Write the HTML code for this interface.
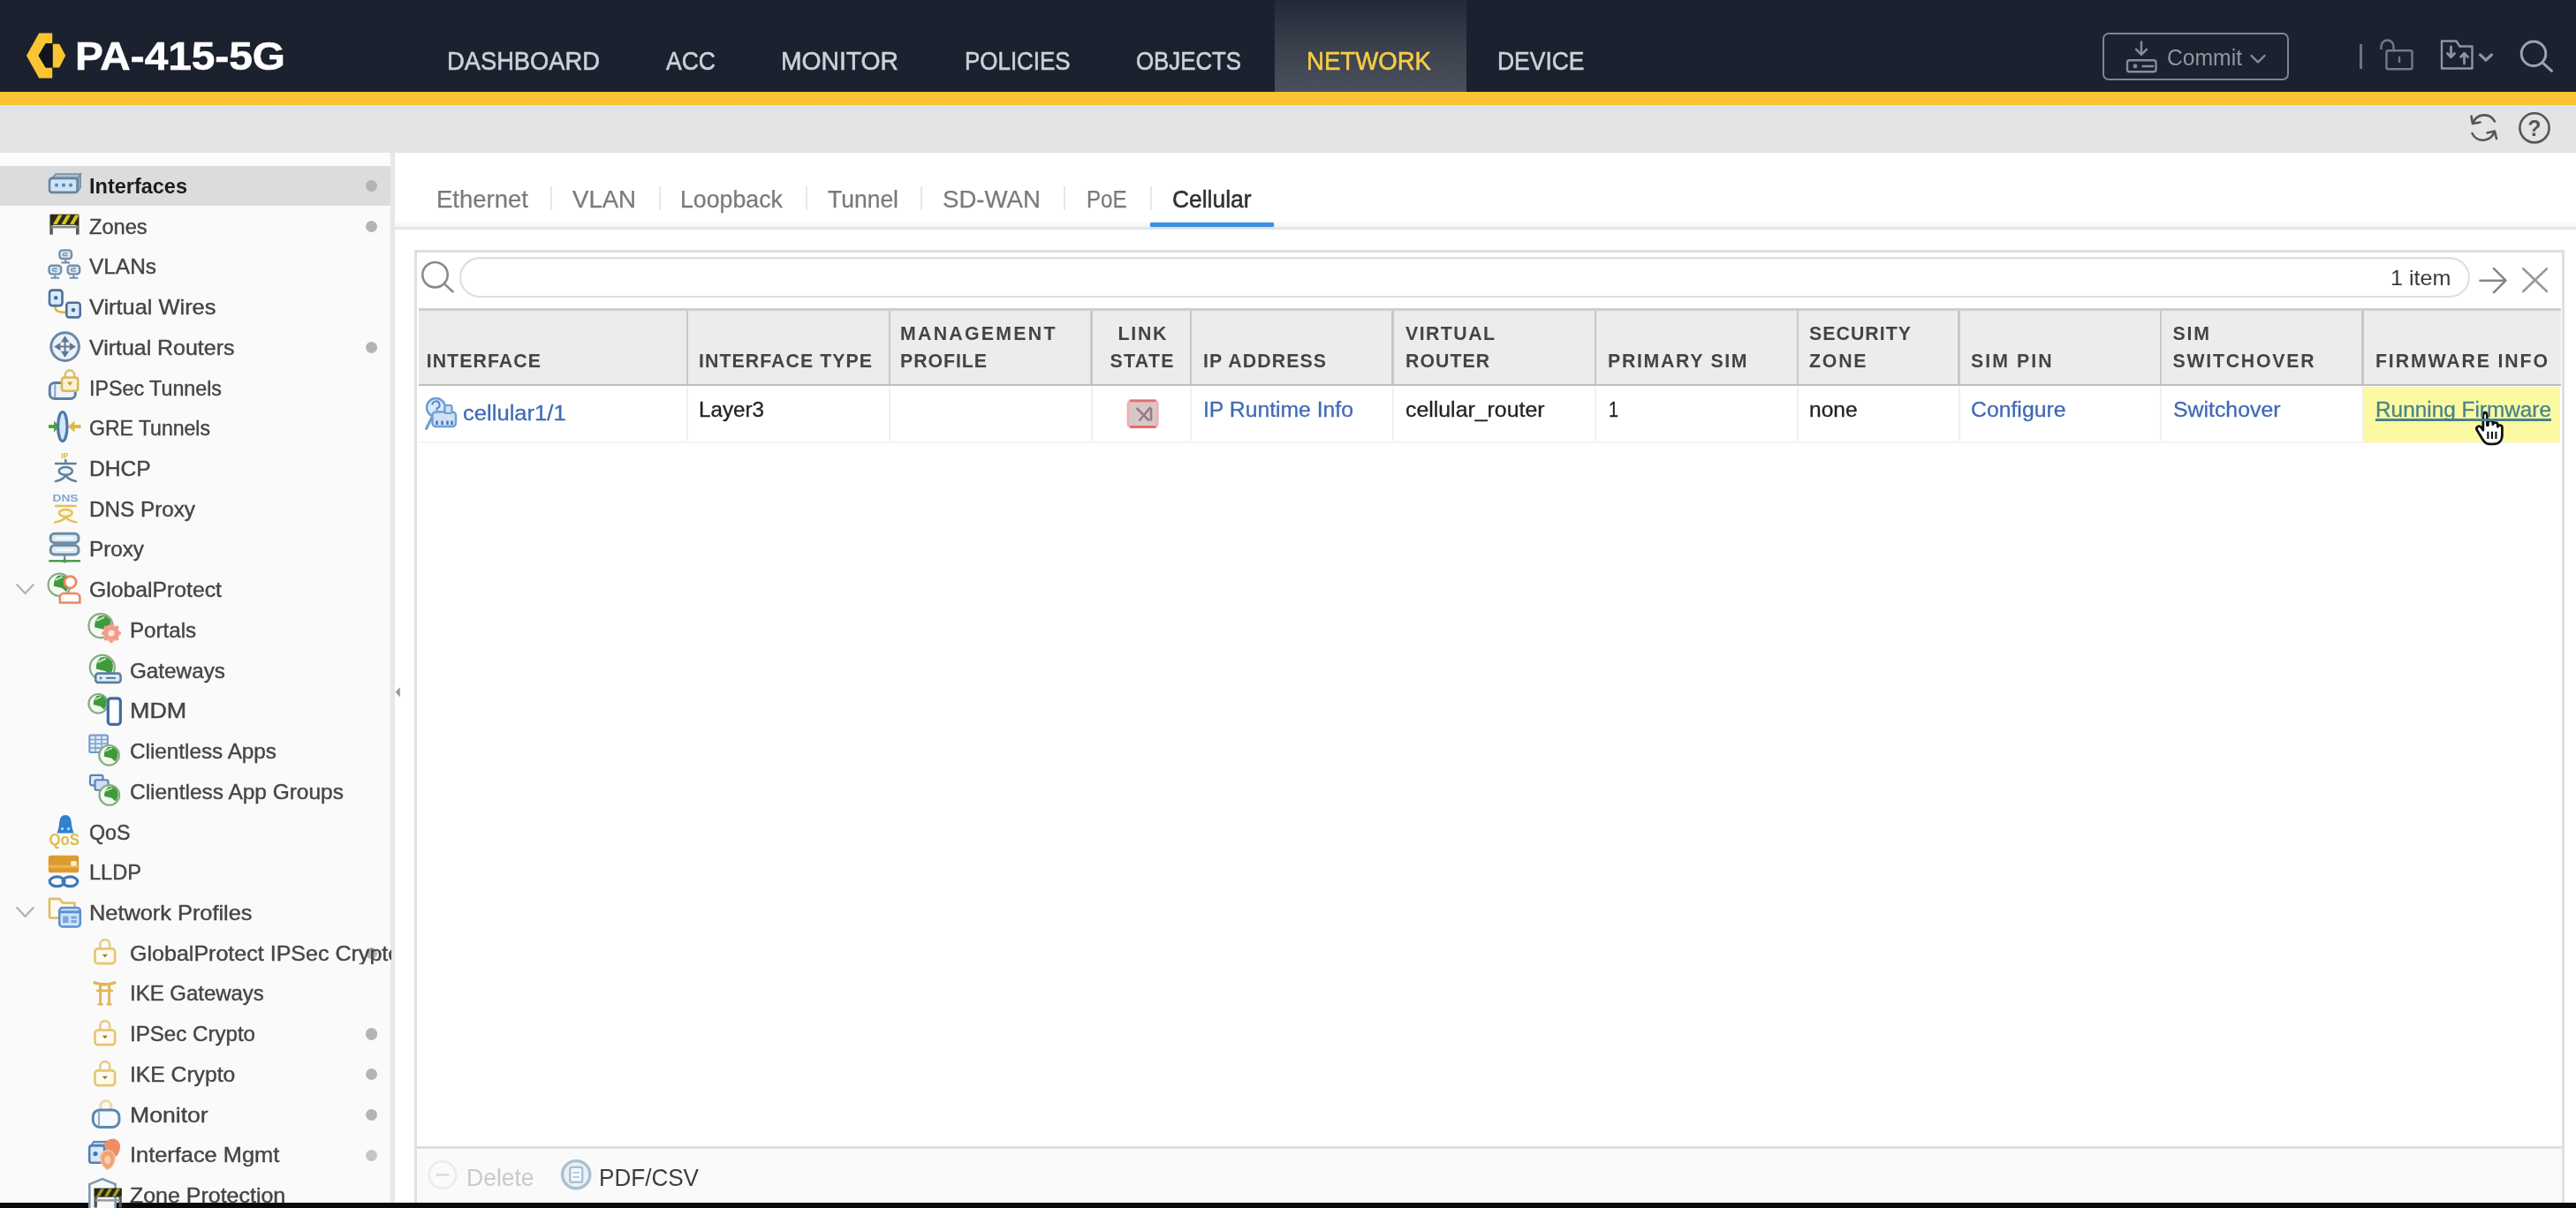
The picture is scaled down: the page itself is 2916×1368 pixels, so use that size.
<!DOCTYPE html>
<html lang="en"><head><meta charset="utf-8"><title>PA-415-5G</title>
<style>

*{box-sizing:border-box;margin:0;padding:0}
html,body{width:2916px;height:1368px;overflow:hidden;background:#fff;font-family:"Liberation Sans",sans-serif}
body{position:relative}
#app{position:absolute;left:0;top:0;width:2916px;height:1368px;overflow:hidden;will-change:transform}
.t{position:absolute;white-space:nowrap;transform-origin:0 50%;display:block;filter:blur(0.4px)}
.a{position:absolute}
ul{list-style:none}
.g{position:absolute;left:0;top:0;width:0;height:0;font-size:inherit;font-weight:inherit}
.nav{-webkit-text-stroke:0.6px currentColor}
.sb{-webkit-text-stroke:0.4px currentColor}
.tab{-webkit-text-stroke:0.25px currentColor}
.cell{-webkit-text-stroke:0.3px currentColor}
.act{-webkit-text-stroke:0.55px currentColor}
svg{position:absolute;overflow:visible;filter:blur(0.45px)}

</style></head>
<body>
<div id="app">
<div class="a" style="left:0px;top:0px;width:2916px;height:104.5px;background:#1b212e"></div>
<div class="a" style="left:1442.5px;top:0px;width:217px;height:104.5px;background:linear-gradient(180deg,#222836 0%,#3a404c 50%,#4b515c 100%)"></div>
<div class="a" style="left:0px;top:104.3px;width:2916px;height:15px;background:#fac432"></div>
<div class="a" style="left:0px;top:119.3px;width:2916px;height:54px;background:linear-gradient(180deg,#dde2f0 0,#dfe3ee 4px,#e3e4e6 7px)"></div>
<div class="a" style="left:2380px;top:37px;width:211px;height:54px;border:2.5px solid #7d8590;border-radius:7px"></div>
<div class="a" style="left:2671px;top:50px;width:2.5px;height:28px;background:#6d747f"></div>
<div class="a" style="left:0px;top:173px;width:443px;height:1195px;background:#fafafa"></div>
<div class="a" style="left:0px;top:173px;width:443px;height:15px;background:#fcfcfc"></div>
<div class="a" style="left:0px;top:188px;width:443px;height:45px;background:#dbdcdd"></div>
<div class="a" style="left:441.8px;top:173px;width:5.6px;height:1195px;background:#e6e7e9"></div>
<div class="a" style="left:414px;top:203.9px;width:13.4px;height:13.4px;border-radius:50%;background:#b4b4b4;filter:blur(0.7px)"></div>
<div class="a" style="left:414px;top:249.6px;width:13.4px;height:13.4px;border-radius:50%;background:#b4b4b4;filter:blur(0.7px)"></div>
<div class="a" style="left:414px;top:386.8px;width:13.4px;height:13.4px;border-radius:50%;background:#b4b4b4;filter:blur(0.7px)"></div>
<div class="a" style="left:414px;top:1072.9px;width:13.4px;height:13.4px;border-radius:50%;background:#b4b4b4;filter:blur(0.7px)"></div>
<div class="a" style="left:414px;top:1164.3px;width:13.4px;height:13.4px;border-radius:50%;background:#b4b4b4;filter:blur(0.7px)"></div>
<div class="a" style="left:414px;top:1210.1px;width:13.4px;height:13.4px;border-radius:50%;background:#b4b4b4;filter:blur(0.7px)"></div>
<div class="a" style="left:414px;top:1255.8px;width:13.4px;height:13.4px;border-radius:50%;background:#b4b4b4;filter:blur(0.7px)"></div>
<div class="a" style="left:414px;top:1301.5px;width:13.4px;height:13.4px;border-radius:50%;background:#c6c6c6;filter:blur(0.7px)"></div>
<div class="a" style="left:447.2px;top:249px;width:2469px;height:8px;background:linear-gradient(180deg,rgba(0,0,0,0),rgba(0,0,0,.045))"></div>
<div class="a" style="left:447.2px;top:256.8px;width:2469px;height:3.4px;background:#e5e5e5"></div>
<div class="a" style="left:1302px;top:252.3px;width:140px;height:5px;background:#3d8fe2;border-radius:1.5px;box-shadow:0 0 2px #9cc8f5"></div>
<div class="a" style="left:622.8px;top:211px;width:2.4px;height:27px;background:#e7e7e7"></div>
<div class="a" style="left:745.8px;top:211px;width:2.4px;height:27px;background:#e7e7e7"></div>
<div class="a" style="left:911.8px;top:211px;width:2.4px;height:27px;background:#e7e7e7"></div>
<div class="a" style="left:1041.8px;top:211px;width:2.4px;height:27px;background:#e7e7e7"></div>
<div class="a" style="left:1203.8px;top:211px;width:2.4px;height:27px;background:#e7e7e7"></div>
<div class="a" style="left:1301.8px;top:211px;width:2.4px;height:27px;background:#e7e7e7"></div>
<div class="a" style="left:469px;top:283px;width:2434px;height:1080px;border:3px solid #e0e0e0;border-bottom:0;background:#fff"></div>
<div class="a" style="left:519.5px;top:291.3px;width:2276px;height:46px;border:2.6px solid #dedede;border-radius:23px;background:#fff;box-shadow:inset 0 1px 2px rgba(0,0,0,.05)"></div>
<div class="a" style="left:474px;top:348.6px;width:2425px;height:88.6px;background:#ececec;border-top:3.2px solid #cfcfcf;border-bottom:2.6px solid #bdbdbd"></div>
<div class="a" style="left:776.5px;top:352px;width:2.4px;height:82.6px;background:#c8c8c8"></div>
<div class="a" style="left:776.7px;top:438px;width:2px;height:61px;background:#efefef"></div>
<div class="a" style="left:1005.6px;top:352px;width:2.4px;height:82.6px;background:#c8c8c8"></div>
<div class="a" style="left:1005.8px;top:438px;width:2px;height:61px;background:#efefef"></div>
<div class="a" style="left:1234.3px;top:352px;width:2.4px;height:82.6px;background:#c8c8c8"></div>
<div class="a" style="left:1234.5px;top:438px;width:2px;height:61px;background:#efefef"></div>
<div class="a" style="left:1346.8px;top:352px;width:2.4px;height:82.6px;background:#c8c8c8"></div>
<div class="a" style="left:1347px;top:438px;width:2px;height:61px;background:#efefef"></div>
<div class="a" style="left:1575.4px;top:352px;width:2.4px;height:82.6px;background:#c8c8c8"></div>
<div class="a" style="left:1575.6px;top:438px;width:2px;height:61px;background:#efefef"></div>
<div class="a" style="left:1804.8px;top:352px;width:2.4px;height:82.6px;background:#c8c8c8"></div>
<div class="a" style="left:1805px;top:438px;width:2px;height:61px;background:#efefef"></div>
<div class="a" style="left:2033.5px;top:352px;width:2.4px;height:82.6px;background:#c8c8c8"></div>
<div class="a" style="left:2033.7px;top:438px;width:2px;height:61px;background:#efefef"></div>
<div class="a" style="left:2216.4px;top:352px;width:2.4px;height:82.6px;background:#c8c8c8"></div>
<div class="a" style="left:2216.6px;top:438px;width:2px;height:61px;background:#efefef"></div>
<div class="a" style="left:2444.8px;top:352px;width:2.4px;height:82.6px;background:#c8c8c8"></div>
<div class="a" style="left:2445px;top:438px;width:2px;height:61px;background:#efefef"></div>
<div class="a" style="left:2673.4px;top:352px;width:2.4px;height:82.6px;background:#c8c8c8"></div>
<div class="a" style="left:2673.6px;top:438px;width:2px;height:61px;background:#efefef"></div>
<div class="a" style="left:474px;top:499.5px;width:2425px;height:2px;background:#f4f4f4"></div>
<div class="a" style="left:2676px;top:438px;width:222px;height:63px;background:#fbfaa2"></div>
<div class="a" style="left:472px;top:1297.5px;width:2428px;height:3px;background:#dedede"></div>
<div class="a" style="left:472px;top:1300.5px;width:2428px;height:62px;background:#fafafa"></div>
<div class="a" style="left:0px;top:1362px;width:2916px;height:6px;background:#0a0a0a"></div>

<svg width="2916" height="1368" viewBox="0 0 2916 1368" style="left:0;top:0" font-family="Liberation Sans, sans-serif">
<polygon points="29.9,62.9 44.2,37.4 59.2,37.4 59.2,49.3 51.7,49.3 43.6,62.9 51.7,76.5 59.2,76.5 59.2,88.4 44.2,88.4" fill="#fac432"/>
<polygon points="51.7,49.3 60,49.3 60,76.5 51.7,76.5 43.6,62.9" fill="#11141d"/>
<polygon points="59.8,49.8 67.2,49.8 74.2,62.9 67.2,76.5 59.8,76.5" fill="#fac432"/>
<g fill="none" stroke="#868d98" stroke-width="2.4" stroke-linecap="round" stroke-linejoin="round">
<path d="M2424,47.5 V61.5 M2418,55.8 L2424,61.8 L2430,55.8"/>
<rect x="2408" y="68.3" width="32.5" height="13" rx="2.5"/>
<path d="M2425.5,75 H2437"/>
<path d="M2548.5,63 L2556,70.5 L2563.5,63"/>
</g>
<circle cx="2417" cy="75" r="2.4" fill="#868d98"/>
<g fill="none" stroke="#8d949f" stroke-width="2.4" stroke-linejoin="round" stroke-linecap="round">
<g stroke="#737a86"><path d="M2695.5,55 V52.5 a7,7 0 0 1 14,0 V57"/>
<rect x="2701.5" y="57.3" width="29" height="21" rx="2"/>
<path d="M2716,65 v5"/></g>
<path d="M2764,77.5 V46.5 h16.5 l4,6 h14 V77.5 Z"/>
<path d="M2774.5,53 v11 M2770.5,60.5 l4,4.2 l4,-4.2" stroke-width="2.8"/>
<path d="M2789.5,72 v-11 M2785.5,64.5 l4,-4.2 l4,4.2" stroke-width="2.8"/>
<path d="M2807.5,62 l6.5,6.2 l6.5,-6.2" stroke-width="3.2"/>
</g>
<g fill="none" stroke="#9ca3ad" stroke-width="3" stroke-linecap="round">
<circle cx="2868" cy="60.8" r="13.8"/><path d="M2878.3,71.2 L2888.5,80.3"/>
</g>
<g fill="none" stroke="#565656" stroke-width="2.6" stroke-linecap="round" stroke-linejoin="round">
<path d="M2799.5,139 A13.5,13.5 0 0 1 2824,137.5"/>
<path d="M2823.5,149.5 A13.5,13.5 0 0 1 2798.5,151"/>
<path d="M2797.5,131.5 L2799,140 L2807.5,138.5"/>
<path d="M2826,157 L2824,148.5 L2815.5,150.5"/>
<circle cx="2869" cy="144.8" r="16.6"/>
</g>
<text x="2869" y="153.6" text-anchor="middle" font-size="25" font-weight="700" fill="#565656">?</text>
<polygon points="59,201.6 63,196.9 91.3,196.9 88,201.6" fill="#a9bfd0" stroke="#6f8ca6" stroke-width="1.5"/>
<polygon points="88,201.6 91.3,196.9 91.3,212.4 88,217.4" fill="#8ea8bc" stroke="#6f8ca6" stroke-width="1.2"/>
<rect x="56" y="201.9" width="31.6" height="16" rx="3" fill="#cfe4f5" stroke="#67859d" stroke-width="2.6"/>
<circle cx="64" cy="209.70000000000002" r="2.1" fill="#4d8cc6"/>
<circle cx="72" cy="209.70000000000002" r="2.1" fill="#4d8cc6"/>
<circle cx="80" cy="209.70000000000002" r="2.1" fill="#4d8cc6"/>
<rect x="56.3" y="243.13" width="3.6" height="22.5" fill="#5a5a5a"/><rect x="86" y="243.13" width="3.6" height="22.5" fill="#5a5a5a"/>
<rect x="57" y="242.63" width="32" height="12.2" fill="#2a2a17"/>
<polygon points="60,254.03 66,243.43 70.5,243.43 64.5,254.03" fill="#d9c51f"/>
<polygon points="69.5,254.03 75.5,243.43 80.0,243.43 74.0,254.03" fill="#d9c51f"/>
<polygon points="79,254.03 85,243.43 89.5,243.43 83.5,254.03" fill="#d9c51f"/>
<rect x="58" y="255.82999999999998" width="30" height="2.6" fill="#8a8a8a"/>
<rect x="67.4" y="283.36" width="13.6" height="9.6" rx="3" fill="#dbeaf7" stroke="#7590a9" stroke-width="2.4"/>
<path d="M76.7,286.76000000000005 h-4 a1.4,1.4 0 0 0 0,2.8 h4" fill="none" stroke="#7f9ab3" stroke-width="1.6"/>
<path d="M74.2,294.16 v2.6 M69.4,297.36 h9.6" fill="none" stroke="#7590a9" stroke-width="2.2"/>
<rect x="55.5" y="300.76" width="13.6" height="9.6" rx="3" fill="#dbeaf7" stroke="#7590a9" stroke-width="2.4"/>
<path d="M64.8,304.16 h-4 a1.4,1.4 0 0 0 0,2.8 h4" fill="none" stroke="#7f9ab3" stroke-width="1.6"/>
<path d="M62.3,311.56 v2.6 M57.5,314.76 h9.6" fill="none" stroke="#7590a9" stroke-width="2.2"/>
<rect x="76.60000000000001" y="300.76" width="13.6" height="9.6" rx="3" fill="#dbeaf7" stroke="#7590a9" stroke-width="2.4"/>
<path d="M85.9,304.16 h-4 a1.4,1.4 0 0 0 0,2.8 h4" fill="none" stroke="#7f9ab3" stroke-width="1.6"/>
<path d="M83.4,311.56 v2.6 M78.60000000000001,314.76 h9.6" fill="none" stroke="#7590a9" stroke-width="2.2"/>
<path d="M62.5,347.09000000000003 Q62,354.59000000000003 75,353.59000000000003" fill="none" stroke="#d8b944" stroke-width="2.6"/>
<rect x="56" y="328.59000000000003" width="14.5" height="17.5" rx="3" fill="#dcebfb" stroke="#4d719b" stroke-width="2.6"/><circle cx="63.2" cy="337.29" r="2.3" fill="#3f6ea5"/>
<rect x="75.3" y="342.79" width="15.4" height="16.6" rx="3" fill="#dcebfb" stroke="#4d719b" stroke-width="2.6"/><circle cx="83" cy="351.09000000000003" r="2.3" fill="#3f6ea5"/>
<circle cx="73.6" cy="392.62" r="15.8" fill="#eaf1f7" stroke="#6c87a3" stroke-width="3"/>
<g fill="#5e7893" stroke="#5e7893" stroke-width="1.6"><path d="M73.6,386.62 V398.62 M67.6,392.62 H79.6" fill="none" stroke-width="2"/>
<polygon points="73.6,381.62 70.4,386.62 76.8,386.62"/><polygon points="73.6,403.62 70.4,398.62 76.8,398.62"/>
<polygon points="62.6,392.62 67.6,389.42 67.6,395.82"/><polygon points="84.6,392.62 79.6,389.42 79.6,395.82"/></g>
<rect x="56.3" y="433.54999999999995" width="29" height="18" rx="5.5" fill="#edf3f9" stroke="#5d7f9e" stroke-width="3"/>
<path d="M62.3,435.04999999999995 V450.04999999999995" stroke="#8aa5bd" stroke-width="2" fill="none"/>
<path d="M73.8,428.04999999999995 v-3.5 a5.2,5.2 0 0 1 10.4,0 v3.5" fill="none" stroke="#dcc077" stroke-width="2.6"/>
<rect x="70" y="427.54999999999995" width="18.2" height="15.2" rx="2.8" fill="#fbf2d3" stroke="#d9b95c" stroke-width="2.6"/>
<path d="M76,432.54999999999995 h6.2 l-3.1,4.4 z" fill="#c7a13c"/>
<polygon points="55,481.08 61,481.08 61,476.58 67.5,483.08 61,489.58 61,485.08 55,485.08" fill="#52a03c"/>
<polygon points="91.5,481.08 84.5,481.08 84.5,476.58 77,483.08 84.5,489.58 84.5,485.08 91.5,485.08" fill="#e1bb3e"/>
<ellipse cx="70.8" cy="483.08" rx="5.2" ry="16.6" fill="#d3e6f8" stroke="#4a79a8" stroke-width="3.2"/>
<text x="73.2" y="519.41" text-anchor="middle" font-size="8.5" font-weight="700" fill="#dcb43c">IP</text>
<g fill="none" stroke="#5f809e" stroke-width="2.5" stroke-linecap="round"><path d="M63,525.01 H85.6 M74.3,521.01 V525.01"/><ellipse cx="74.3" cy="533.51" rx="7.6" ry="4.4" fill="#eef4f9"/><path d="M63,545.01 Q71,543.51 74.3,538.51 Q78,543.51 86,545.01"/></g>
<text x="74" y="568.14" text-anchor="middle" font-size="11.5" font-weight="700" fill="#84a6c9" textLength="29" lengthAdjust="spacingAndGlyphs">DNS</text>
<g fill="none" stroke="#e2c258" stroke-width="2.5" stroke-linecap="round"><path d="M63,572.94 H85.6"/><ellipse cx="74.3" cy="581.04" rx="7.4" ry="4" fill="#fdf6dc"/><path d="M62,591.44 Q71,590.24 74.3,585.74 Q78,590.24 86.6,591.44"/></g>
<rect x="57.2" y="604.27" width="31.8" height="10.4" rx="4.5" fill="#dbe9f4" stroke="#6f8da4" stroke-width="3"/>
<rect x="57.2" y="617.47" width="31.8" height="10.6" rx="4.5" fill="#dbe9f4" stroke="#6f8da4" stroke-width="3"/>
<path d="M63,609.47 h20 M63,622.77 h20" stroke="#f4f9fd" stroke-width="2.4" fill="none"/>
<path d="M73.2,628.97 V634.47" stroke="#6f8da4" stroke-width="2.2" fill="none"/>
<path d="M55.3,635.27 H91" stroke="#4f9c4f" stroke-width="2.6" fill="none"/><polygon points="69.5,635.27 73.2,632.77 77,635.27 73.2,637.77" fill="#4f9c4f"/>
<circle cx="67.2" cy="662.1999999999999" r="12.6" fill="#f4faf2" stroke="#88ab86" stroke-width="2.2"/>
<path d="M65.3,652.1 Q72.9,649.6 77.3,656.5 Q79.8,664.1 74.8,670.0 L70.4,666.0 L60.9,663.7 Q60.3,657.2 65.3,652.1 Z" fill="#3f9a3c"/>
<path d="M63.4,656.5 L70.4,653.4" fill="none" stroke="#b9e4ae" stroke-width="2.0" stroke-linecap="round"/>
<path d="M67.8,682.4999999999999 v-6 a4.5,4.5 0 0 1 4.5,-4.5 h13.6 a4.5,4.5 0 0 1 4.5,4.5 v6 z" fill="#ffffff" stroke="#e98a60" stroke-width="2.6"/>
<circle cx="79.6" cy="659.1999999999999" r="6.6" fill="#ffffff" stroke="#e98a60" stroke-width="2.8"/>
<circle cx="114" cy="708.7299999999999" r="13.6" fill="#f4faf2" stroke="#88ab86" stroke-width="2.2"/>
<path d="M112.0,697.8 Q120.1,695.1 124.9,702.6 Q127.6,710.8 122.2,717.2 L117.4,712.8 L107.2,710.4 Q106.5,703.3 112.0,697.8 Z" fill="#3f9a3c"/>
<path d="M109.9,702.6 L117.4,699.2" fill="none" stroke="#b9e4ae" stroke-width="2.2" stroke-linecap="round"/>
<circle cx="126" cy="717.13" r="8.8" fill="#f09c88" stroke="#f4b5a6" stroke-width="1.6"/><circle cx="126" cy="717.13" r="3.6" fill="#fde3dc"/>
<circle cx="135.2" cy="717.1" r="2" fill="#f09c88"/>
<circle cx="132.5" cy="723.6" r="2" fill="#f09c88"/>
<circle cx="126.0" cy="726.3" r="2" fill="#f09c88"/>
<circle cx="119.5" cy="723.6" r="2" fill="#f09c88"/>
<circle cx="116.8" cy="717.1" r="2" fill="#f09c88"/>
<circle cx="119.5" cy="710.6" r="2" fill="#f09c88"/>
<circle cx="126.0" cy="707.9" r="2" fill="#f09c88"/>
<circle cx="132.5" cy="710.6" r="2" fill="#f09c88"/>
<circle cx="115.8" cy="755.86" r="14" fill="#f4faf2" stroke="#88ab86" stroke-width="2.2"/>
<path d="M113.7,744.7 Q122.1,741.9 127.0,749.6 Q129.8,758.0 124.2,764.5 L119.3,760.1 L108.8,757.5 Q108.1,750.3 113.7,744.7 Z" fill="#3f9a3c"/>
<path d="M111.6,749.6 L119.3,746.1" fill="none" stroke="#b9e4ae" stroke-width="2.2" stroke-linecap="round"/>
<rect x="108.2" y="762.66" width="28.4" height="10.2" rx="3" fill="#e3edf7" stroke="#5d80a2" stroke-width="2.6"/>
<path d="M120,767.86 h11" stroke="#5d80a2" stroke-width="2.2" fill="none"/><circle cx="114" cy="767.86" r="1.5" fill="#5d80a2"/>
<circle cx="111.2" cy="796.79" r="10.8" fill="#f4faf2" stroke="#88ab86" stroke-width="2.2"/>
<path d="M109.6,788.1 Q116.1,786.0 119.8,791.9 Q122.0,798.4 117.7,803.5 L113.9,800.0 L105.8,798.1 Q105.3,792.5 109.6,788.1 Z" fill="#3f9a3c"/>
<path d="M108.0,791.9 L113.9,789.2" fill="none" stroke="#b9e4ae" stroke-width="1.7" stroke-linecap="round"/>
<rect x="122.3" y="790.79" width="14" height="29.6" rx="3.2" fill="#ffffff" stroke="#3e6d99" stroke-width="3.2"/>
<rect x="101.3" y="832.5199999999999" width="20.6" height="19.6" rx="1.5" fill="#dfeaf9" stroke="#7097c8" stroke-width="2"/>
<path d="M101.3,837.5199999999999 h20.6 M101.3,842.3199999999999 h20.6 M101.3,847.1199999999999 h20.6 M108.2,832.5199999999999 v19.6 M115,832.5199999999999 v19.6" stroke="#7fa3d2" stroke-width="1.6" fill="none"/>
<circle cx="123.5" cy="855.3199999999999" r="11.3" fill="#f4faf2" stroke="#88ab86" stroke-width="2.2"/>
<path d="M121.8,846.3 Q128.6,844.0 132.5,850.2 Q134.8,857.0 130.3,862.3 L126.3,858.7 L117.8,856.7 Q117.3,850.8 121.8,846.3 Z" fill="#3f9a3c"/>
<path d="M120.1,850.2 L126.3,847.4" fill="none" stroke="#b9e4ae" stroke-width="1.8" stroke-linecap="round"/>
<rect x="102" y="877.8499999999999" width="14.5" height="11.5" rx="2" fill="#dfeaf9" stroke="#5b83b8" stroke-width="2.2"/>
<rect x="107.5" y="883.2499999999999" width="15" height="11.5" rx="2" fill="#cfe0f6" stroke="#5b83b8" stroke-width="2.2"/>
<circle cx="123.8" cy="900.4499999999999" r="11.3" fill="#f4faf2" stroke="#88ab86" stroke-width="2.2"/>
<path d="M122.1,891.4 Q128.9,889.1 132.8,895.4 Q135.1,902.1 130.6,907.5 L126.6,903.8 L118.1,901.8 Q117.6,895.9 122.1,891.4 Z" fill="#3f9a3c"/>
<path d="M120.4,895.4 L126.6,892.5" fill="none" stroke="#b9e4ae" stroke-width="1.8" stroke-linecap="round"/>
<path d="M64.3,943.3799999999999 Q66.5,939.5799999999999 67.3,930.5799999999999 Q68,923.0799999999999 74,923.0799999999999 Q80,923.0799999999999 80.7,930.5799999999999 Q81.5,939.5799999999999 83.7,943.3799999999999 Z" fill="#2f80d2"/>
<circle cx="70.5" cy="938.5799999999999" r="1.8" fill="#a9d0f5"/><circle cx="77.5" cy="938.5799999999999" r="1.8" fill="#a9d0f5"/>
<text x="72.8" y="957.18" text-anchor="middle" font-size="18" font-weight="700" fill="#dcbd55" stroke="#f7f0d8" stroke-width="0.6" paint-order="stroke" textLength="34.5" lengthAdjust="spacingAndGlyphs">QoS</text>
<rect x="54.8" y="968.7099999999999" width="34.4" height="19.6" rx="2.5" fill="#db9c2c"/>
<rect x="54.8" y="979.81" width="34.4" height="3" fill="#e8b45a"/>
<rect x="80.3" y="975.31" width="6.4" height="5.2" rx="1" fill="#fdf3df"/>
<ellipse cx="64.6" cy="998.31" rx="8.4" ry="5.4" fill="none" stroke="#4076b8" stroke-width="3.2"/><ellipse cx="79.4" cy="998.31" rx="8.4" ry="5.4" fill="none" stroke="#4076b8" stroke-width="3.2"/>
<path d="M56,1039.54 V1017.8399999999999 h11.5 l3.5,4.6 h13.5 v6" fill="#fffaf0" stroke="#e2bc60" stroke-width="2.6" stroke-linejoin="round"/>
<path d="M56,1039.54 h12" stroke="#e2bc60" stroke-width="2.6" fill="none"/>
<rect x="67.2" y="1028.04" width="23.6" height="21.4" rx="3.5" fill="#cfe3f8" stroke="#5c90d0" stroke-width="2.6"/>
<path d="M67.2,1032.74 h23.6" stroke="#5c90d0" stroke-width="3" fill="none"/>
<rect x="71.2" y="1037.54" width="6.4" height="7.6" fill="#7aa7dc"/><rect x="80.4" y="1037.54" width="6.4" height="3" fill="#7aa7dc"/><rect x="80.4" y="1042.04" width="6.4" height="3" fill="#7aa7dc"/>
<path d="M113.39999999999999,1074.47 v-5 a5.4,5.4 0 0 1 10.8,0 v5" fill="none" stroke="#e8cd85" stroke-width="2.7"/>
<rect x="107.5" y="1074.47" width="22.6" height="16.6" rx="3.2" fill="#fffaf0" stroke="#e6c672" stroke-width="2.7"/>
<path d="M115.8,1080.67 h6 l-3,3.6 z" fill="#8d7636"/>
<path d="M113.39999999999999,1166.53 v-5 a5.4,5.4 0 0 1 10.8,0 v5" fill="none" stroke="#e8cd85" stroke-width="2.7"/>
<rect x="107.5" y="1166.53" width="22.6" height="16.6" rx="3.2" fill="#fffaf0" stroke="#e6c672" stroke-width="2.7"/>
<path d="M115.8,1172.73 h6 l-3,3.6 z" fill="#8d7636"/>
<path d="M113.39999999999999,1212.46 v-5 a5.4,5.4 0 0 1 10.8,0 v5" fill="none" stroke="#e8cd85" stroke-width="2.7"/>
<rect x="107.5" y="1212.46" width="22.6" height="16.6" rx="3.2" fill="#fffaf0" stroke="#e6c672" stroke-width="2.7"/>
<path d="M115.8,1218.66 h6 l-3,3.6 z" fill="#8d7636"/>
<g fill="none" stroke="#e2b556" stroke-linecap="round"><path d="M107.3,1112.9 Q118.5,1116.9 129.8,1112.9" stroke-width="3.6"/><path d="M110.3,1121.9 H126.8" stroke-width="2.6"/><path d="M113.6,1115.5 V1137.1 M123.6,1115.5 V1137.1" stroke-width="2.9"/><path d="M111.3,1137.3 h4.6 M121.3,1137.3 h4.6" stroke-width="2.2"/></g>
<path d="M113.8,1257.69 v-5 a6,6 0 0 1 12,0 v5" fill="none" stroke="#eadcae" stroke-width="3.2"/>
<rect x="105.3" y="1256.89" width="29.6" height="19.6" rx="7.5" fill="#f5f9fd" stroke="#5f87aa" stroke-width="3"/>
<path d="M112,1258.89 V1274.69" stroke="#8fb0cb" stroke-width="2.2" fill="none"/>
<polygon points="103,1297.42 106,1292.92 121,1292.92 118,1297.42" fill="#b4cbe6" stroke="#4f80b7" stroke-width="1.6"/>
<rect x="101.2" y="1297.42" width="17" height="19.4" rx="2.5" fill="#d9e7f8" stroke="#4f80b7" stroke-width="2.6"/><circle cx="108" cy="1306.6200000000001" r="2.6" fill="#3f76b8"/>
<path d="M118,1296.42 Q121,1288.92 129,1289.42 Q136.5,1291.42 136,1299.42 Q135,1309.42 127.5,1311.42 Q119.5,1307.42 118,1296.42 Z" fill="#ee8e64"/>
<path d="M113.5,1309.42 Q117,1301.92 124,1302.92 Q130.5,1305.42 130,1313.42 Q128.5,1321.92 121.5,1324.42 Q114,1320.42 113.5,1309.42 Z" fill="#f3a070" stroke="#f7c6a4" stroke-width="1.4"/>
<ellipse cx="121.8" cy="1313.42" rx="3.6" ry="5" fill="#f8cfae"/>
<path d="M101.3,1368 V1341.15 L116,1335.15 L130.6,1341.15 V1368" fill="#f4f9fd" stroke="#7f99ae" stroke-width="2.6"/>
<rect x="106.5" y="1345.5500000000002" width="31.3" height="10" fill="#25250f"/>
<polygon points="109,1354.75 114,1346.3500000000001 118,1346.3500000000001 113,1354.75" fill="#a89c25"/>
<polygon points="118,1354.75 123,1346.3500000000001 127,1346.3500000000001 122,1354.75" fill="#a89c25"/>
<polygon points="127,1354.75 132,1346.3500000000001 136,1346.3500000000001 131,1354.75" fill="#a89c25"/>
<rect x="106.5" y="1355.5500000000002" width="3.4" height="12" fill="#555"/><rect x="134.4" y="1355.5500000000002" width="3.4" height="12" fill="#555"/><rect x="108" y="1358.15" width="28" height="2.4" fill="#999"/>
<path d="M19.4,662.1999999999999 L28.5,671.9999999999999 L37.6,662.1999999999999" fill="none" stroke="#b4b4b4" stroke-width="2.4" stroke-linecap="round" stroke-linejoin="round"/>
<path d="M19.4,1028.04 L28.5,1037.84 L37.6,1028.04" fill="none" stroke="#b4b4b4" stroke-width="2.4" stroke-linecap="round" stroke-linejoin="round"/>
<polygon points="452.8,778.2 447.6,783.8 452.8,789.4" fill="#9a9a9a"/>
<g fill="none" stroke="#8a8a8a" stroke-width="2.6" stroke-linecap="round"><circle cx="492.5" cy="311.2" r="14.2"/><path d="M503.2,321.6 L512.5,330.2"/></g>
<g fill="none" stroke="#858585" stroke-width="2.6" stroke-linecap="round" stroke-linejoin="round"><path d="M2807.5,317.7 H2836 M2823,304.2 L2836.5,317.7 L2823,331.2"/><path d="M2856.2,304.2 L2883,330 M2883,304.2 L2856.2,330" stroke="#9a9a9a"/></g>
<g>
<circle cx="493.5" cy="461.5" r="10.5" fill="#dbe9f8" stroke="#6e9ed4" stroke-width="2.4"/>
<path d="M489.5,458.5 a4,4 0 1 1 5.2,3.8 v2.4" fill="none" stroke="#5c8fcb" stroke-width="2.2"/>
<path d="M490,470.5 L482.5,485.5" stroke="#6e9ed4" stroke-width="3" fill="none" stroke-linecap="round"/>
<rect x="489.5" y="466.5" width="26.5" height="16.5" rx="4" fill="#cfe1f6" stroke="#6e9ed4" stroke-width="2.4"/>
<rect x="503.5" y="459" width="8" height="9" rx="2" fill="#cfe1f6" stroke="#6e9ed4" stroke-width="2.2"/>
<path d="M494.5,476.5 v4.5 M500.5,476.5 v4.5 M506.5,476.5 v4.5 M511.5,476.5 v4.5" stroke="#3f76b8" stroke-width="2.4"/>
</g>
<rect x="1276.8" y="453.8" width="33.6" height="29.8" rx="3.5" fill="#d8c7c7" stroke="#efb0b0" stroke-width="2.4"/>
<path d="M1279,453.9 H1308.4 M1279,483.5 H1308.4" stroke="#e46e6e" stroke-width="2.8" fill="none"/>
<path d="M1286.5,462 L1301,476.5 M1302.5,461 L1289.5,476.5 M1303,462 V476.5" stroke="#9a7b8a" stroke-width="2.6" fill="none"/>
<circle cx="501" cy="1330.5" r="15.3" fill="#fbfbfb" stroke="#ececec" stroke-width="2.6"/><path d="M493.5,1330.5 h15" stroke="#dddddd" stroke-width="2.6"/>
<circle cx="652.2" cy="1330.2" r="15.6" fill="#e9f2f8" stroke="#a9c0d1" stroke-width="3.4"/>
<rect x="645.2" y="1321.8" width="14" height="17" rx="2.4" fill="#f4f9fc" stroke="#a9c0d1" stroke-width="2.4"/>
<path d="M648.5,1328 h7.5 M648.5,1333 h7.5" stroke="#b7cddd" stroke-width="2"/>
<g transform="translate(2800.5,464.5) scale(1.62)">
<path d="M7.2,1.6 c1.1,0 2,0.9 2,2 v7 l0.6,0 v-1.6 c0,-1 0.8,-1.7 1.7,-1.7 c1,0 1.7,0.8 1.7,1.7 v1 c0.2,-0.8 0.9,-1.3 1.7,-1.3 c1,0 1.7,0.8 1.7,1.7 v1.2 c0.2,-0.7 0.8,-1.1 1.5,-1.1 c0.9,0 1.6,0.7 1.6,1.6 v5.4 c0,3.6 -2.2,6.2 -6.2,6.2 h-2.2 c-2.6,0 -4,-1.2 -5.2,-3.2 l-4,-6.6 c-0.5,-0.9 -0.3,-1.9 0.5,-2.4 c0.8,-0.5 1.8,-0.3 2.4,0.5 l1.4,2 V3.6 c0,-1.1 0.9,-2 2,-2 z" fill="#ffffff" stroke="#111111" stroke-width="1.7" stroke-linejoin="round"/>
<path d="M9.8,15 v5 M12.6,15 v5 M15.4,15 v5" stroke="#111" stroke-width="1.3" fill="none"/>
</g>
</svg>
<header class="g"><h1 class="g">
<span class="t" style="left:85.2px;top:41.6px;font-size:44px;line-height:44px;color:#ffffff;font-weight:700;transform:scaleX(1.0845);-webkit-text-stroke:0.6px #fff;">PA-415-5G</span>
</h1>
<nav class="g">
<a class="t nav" style="left:506.0px;top:54.1px;font-size:30px;line-height:30px;color:#cdd1d8;transform:scaleX(0.9103);">DASHBOARD</a>
<a class="t nav" style="left:754.0px;top:54.1px;font-size:30px;line-height:30px;color:#cdd1d8;transform:scaleX(0.8841);">ACC</a>
<a class="t nav" style="left:884.0px;top:54.1px;font-size:30px;line-height:30px;color:#cdd1d8;transform:scaleX(0.9425);">MONITOR</a>
<a class="t nav" style="left:1092.0px;top:54.1px;font-size:30px;line-height:30px;color:#cdd1d8;transform:scaleX(0.8642);">POLICIES</a>
<a class="t nav" style="left:1286.0px;top:54.1px;font-size:30px;line-height:30px;color:#cdd1d8;transform:scaleX(0.8601);">OBJECTS</a>
<a class="t nav" style="left:1479.0px;top:54.1px;font-size:30px;line-height:30px;color:#f6cb45;transform:scaleX(0.9196);">NETWORK</a>
<a class="t nav" style="left:1695.0px;top:54.1px;font-size:30px;line-height:30px;color:#cdd1d8;transform:scaleX(0.8818);">DEVICE</a>
</nav>
<div class="g">
<span class="t" style="left:2452.5px;top:52.7px;font-size:25.5px;line-height:25.5px;color:#8f96a0;transform:scaleX(0.9676);">Commit</span>
</div></header>
<aside class="g"><ul class="g">
<li class="t" style="left:101.0px;top:199.5px;font-size:23.7px;line-height:23.7px;color:#1c1c1c;font-weight:700;transform:scaleX(0.9918);">Interfaces</li>
<li class="t sb" style="left:101.0px;top:245.5px;font-size:23.7px;line-height:23.7px;color:#454545;transform:scaleX(0.9978);">Zones</li>
<li class="t sb" style="left:101.0px;top:290.7px;font-size:23.7px;line-height:23.7px;color:#454545;transform:scaleX(1.0307);">VLANs</li>
<li class="t sb" style="left:101.0px;top:336.7px;font-size:23.7px;line-height:23.7px;color:#454545;transform:scaleX(1.0715);">Virtual Wires</li>
<li class="t sb" style="left:101.0px;top:382.7px;font-size:23.7px;line-height:23.7px;color:#454545;transform:scaleX(1.0522);">Virtual Routers</li>
<li class="t sb" style="left:101.0px;top:428.6px;font-size:23.7px;line-height:23.7px;color:#454545;transform:scaleX(0.9820);">IPSec Tunnels</li>
<li class="t sb" style="left:101.0px;top:473.6px;font-size:23.7px;line-height:23.7px;color:#454545;transform:scaleX(0.9724);">GRE Tunnels</li>
<li class="t sb" style="left:101.0px;top:519.6px;font-size:23.7px;line-height:23.7px;color:#454545;transform:scaleX(1.0384);">DHCP</li>
<li class="t sb" style="left:101.0px;top:565.5px;font-size:23.7px;line-height:23.7px;color:#454545;transform:scaleX(1.0243);">DNS Proxy</li>
<li class="t sb" style="left:101.0px;top:610.5px;font-size:23.7px;line-height:23.7px;color:#454545;transform:scaleX(1.0237);">Proxy</li>
<li class="t sb" style="left:101.0px;top:656.7px;font-size:23.7px;line-height:23.7px;color:#454545;transform:scaleX(1.0452);">GlobalProtect</li>
<li class="t sb" style="left:101.0px;top:931.6px;font-size:23.7px;line-height:23.7px;color:#454545;transform:scaleX(0.9809);">QoS</li>
<li class="t sb" style="left:101.0px;top:976.5px;font-size:23.7px;line-height:23.7px;color:#454545;transform:scaleX(0.9955);">LLDP</li>
<li class="t sb" style="left:101.0px;top:1022.7px;font-size:23.7px;line-height:23.7px;color:#454545;transform:scaleX(1.0699);">Network Profiles</li>
<li class="t sb" style="left:146.8px;top:702.7px;font-size:23.7px;line-height:23.7px;color:#454545;transform:scaleX(1.0199);">Portals</li>
<li class="t sb" style="left:146.8px;top:748.7px;font-size:23.7px;line-height:23.7px;color:#454545;transform:scaleX(1.0244);">Gateways</li>
<li class="t sb" style="left:146.8px;top:793.6px;font-size:23.7px;line-height:23.7px;color:#454545;transform:scaleX(1.1347);">MDM</li>
<li class="t sb" style="left:146.8px;top:839.6px;font-size:23.7px;line-height:23.7px;color:#454545;transform:scaleX(1.0250);">Clientless Apps</li>
<li class="t sb" style="left:146.8px;top:885.6px;font-size:23.7px;line-height:23.7px;color:#454545;transform:scaleX(1.0321);">Clientless App Groups</li>
<li class="t sb" style="left:146.8px;top:1068.7px;font-size:23.7px;line-height:23.7px;color:#454545;transform:scaleX(1.0572);width:279.7px;overflow:hidden;">GlobalProtect IPSec Crypto</li>
<li class="t sb" style="left:146.8px;top:1113.7px;font-size:23.7px;line-height:23.7px;color:#454545;transform:scaleX(1.0114);">IKE Gateways</li>
<li class="t sb" style="left:146.8px;top:1159.7px;font-size:23.7px;line-height:23.7px;color:#454545;transform:scaleX(1.0176);">IPSec Crypto</li>
<li class="t sb" style="left:146.8px;top:1205.6px;font-size:23.7px;line-height:23.7px;color:#454545;transform:scaleX(1.0408);">IKE Crypto</li>
<li class="t sb" style="left:146.8px;top:1251.6px;font-size:23.7px;line-height:23.7px;color:#454545;transform:scaleX(1.1228);">Monitor</li>
<li class="t sb" style="left:146.8px;top:1296.6px;font-size:23.7px;line-height:23.7px;color:#454545;transform:scaleX(1.0710);">Interface Mgmt</li>
<li class="t sb" style="left:146.8px;top:1342.5px;font-size:23.7px;line-height:23.7px;color:#454545;transform:scaleX(1.0536);">Zone Protection</li>
</ul></aside>
<main class="g"><div class="g">
<a class="t tab" style="left:494.0px;top:211.5px;font-size:28.0px;line-height:28.0px;color:#7a7a7a;transform:scaleX(0.9824);">Ethernet</a>
<a class="t tab" style="left:648.0px;top:211.5px;font-size:28.0px;line-height:28.0px;color:#7a7a7a;transform:scaleX(0.9842);">VLAN</a>
<a class="t tab" style="left:770.0px;top:211.5px;font-size:28.0px;line-height:28.0px;color:#7a7a7a;transform:scaleX(0.9552);">Loopback</a>
<a class="t tab" style="left:937.0px;top:211.5px;font-size:28.0px;line-height:28.0px;color:#7a7a7a;transform:scaleX(0.9459);">Tunnel</a>
<a class="t tab" style="left:1067.0px;top:211.5px;font-size:28.0px;line-height:28.0px;color:#7a7a7a;transform:scaleX(0.9865);">SD-WAN</a>
<a class="t tab" style="left:1230.0px;top:211.5px;font-size:28.0px;line-height:28.0px;color:#7a7a7a;transform:scaleX(0.8614);">PoE</a>
<a class="t act" style="left:1327.0px;top:211.5px;font-size:28.0px;line-height:28.0px;color:#303030;transform:scaleX(0.9427);">Cellular</a>
</div>
<div class="g">
<span class="t" style="left:2705.7px;top:302.5px;font-size:24.3px;line-height:24.3px;color:#3a3a3a;transform:scaleX(1.0352);">1 item</span>
</div>
<section class="g"><div class="g">
<span class="t" style="left:482.7px;top:398.7px;font-size:21.3px;line-height:21.3px;color:#444444;font-weight:700;letter-spacing:1.07px;">INTERFACE</span>
<span class="t" style="left:791.0px;top:398.7px;font-size:21.3px;line-height:21.3px;color:#444444;font-weight:700;letter-spacing:1.06px;">INTERFACE TYPE</span>
<span class="t" style="left:1019.0px;top:367.5px;font-size:21.3px;line-height:21.3px;color:#444444;font-weight:700;letter-spacing:2.28px;">MANAGEMENT</span>
<span class="t" style="left:1019.0px;top:398.7px;font-size:21.3px;line-height:21.3px;color:#444444;font-weight:700;letter-spacing:0.95px;">PROFILE</span>
<span class="t" style="left:1265.5px;top:367.5px;font-size:21.3px;line-height:21.3px;color:#444444;font-weight:700;letter-spacing:1.77px;">LINK</span>
<span class="t" style="left:1256.5px;top:398.7px;font-size:21.3px;line-height:21.3px;color:#444444;font-weight:700;letter-spacing:1.34px;">STATE</span>
<span class="t" style="left:1362.0px;top:398.7px;font-size:21.3px;line-height:21.3px;color:#444444;font-weight:700;letter-spacing:1.11px;">IP ADDRESS</span>
<span class="t" style="left:1591.0px;top:367.5px;font-size:21.3px;line-height:21.3px;color:#444444;font-weight:700;letter-spacing:1.45px;">VIRTUAL</span>
<span class="t" style="left:1591.0px;top:398.7px;font-size:21.3px;line-height:21.3px;color:#444444;font-weight:700;letter-spacing:1.02px;">ROUTER</span>
<span class="t" style="left:1820.0px;top:398.7px;font-size:21.3px;line-height:21.3px;color:#444444;font-weight:700;letter-spacing:1.68px;">PRIMARY SIM</span>
<span class="t" style="left:2048.0px;top:367.5px;font-size:21.3px;line-height:21.3px;color:#444444;font-weight:700;letter-spacing:1.04px;">SECURITY</span>
<span class="t" style="left:2048.0px;top:398.7px;font-size:21.3px;line-height:21.3px;color:#444444;font-weight:700;letter-spacing:1.78px;">ZONE</span>
<span class="t" style="left:2231.0px;top:398.7px;font-size:21.3px;line-height:21.3px;color:#444444;font-weight:700;letter-spacing:2.04px;">SIM PIN</span>
<span class="t" style="left:2459.5px;top:367.5px;font-size:21.3px;line-height:21.3px;color:#444444;font-weight:700;letter-spacing:1.81px;">SIM</span>
<span class="t" style="left:2459.5px;top:398.7px;font-size:21.3px;line-height:21.3px;color:#444444;font-weight:700;letter-spacing:1.74px;">SWITCHOVER</span>
<span class="t" style="left:2689.0px;top:398.7px;font-size:21.3px;line-height:21.3px;color:#444444;font-weight:700;letter-spacing:1.86px;">FIRMWARE INFO</span>
</div>
<div class="g">
<span class="t cell" style="left:524.0px;top:455.7px;font-size:24.6px;line-height:24.6px;color:#4069b6;transform:scaleX(1.0409);">cellular1/1</span>
<span class="t cell" style="left:791.0px;top:451.6px;font-size:24.6px;line-height:24.6px;color:#222;transform:scaleX(0.9840);">Layer3</span>
<span class="t cell" style="left:1362.0px;top:451.6px;font-size:24.6px;line-height:24.6px;color:#4069b6;transform:scaleX(1.0055);">IP Runtime Info</span>
<span class="t cell" style="left:1591.0px;top:451.6px;font-size:24.6px;line-height:24.6px;color:#222;transform:scaleX(1.0106);">cellular_router</span>
<span class="t cell" style="left:1821.0px;top:451.6px;font-size:24.6px;line-height:24.6px;color:#222;transform:scaleX(0.8037);">1</span>
<span class="t cell" style="left:2048.0px;top:451.6px;font-size:24.6px;line-height:24.6px;color:#222;transform:scaleX(0.9978);">none</span>
<span class="t cell" style="left:2231.0px;top:451.6px;font-size:24.6px;line-height:24.6px;color:#4069b6;transform:scaleX(1.0081);">Configure</span>
<span class="t cell" style="left:2459.5px;top:451.6px;font-size:24.6px;line-height:24.6px;color:#4069b6;transform:scaleX(1.0101);">Switchover</span>
<span class="t cell" style="left:2689.0px;top:451.6px;font-size:24.6px;line-height:24.6px;color:#48838a;transform:scaleX(0.9904);text-decoration:underline;text-decoration-thickness:2.8px;text-underline-offset:2px;text-decoration-skip-ink:none;">Running Firmware</span>
</div></section>
<footer class="g">
<span class="t" style="left:527.6px;top:1318.9px;font-size:28.3px;line-height:28.3px;color:#c9c9c9;transform:scaleX(0.9365);">Delete</span>
<span class="t" style="left:678.0px;top:1318.9px;font-size:28.3px;line-height:28.3px;color:#3d3d3d;transform:scaleX(0.9214);">PDF/CSV</span>
</footer></main>
</div>
</body></html>
